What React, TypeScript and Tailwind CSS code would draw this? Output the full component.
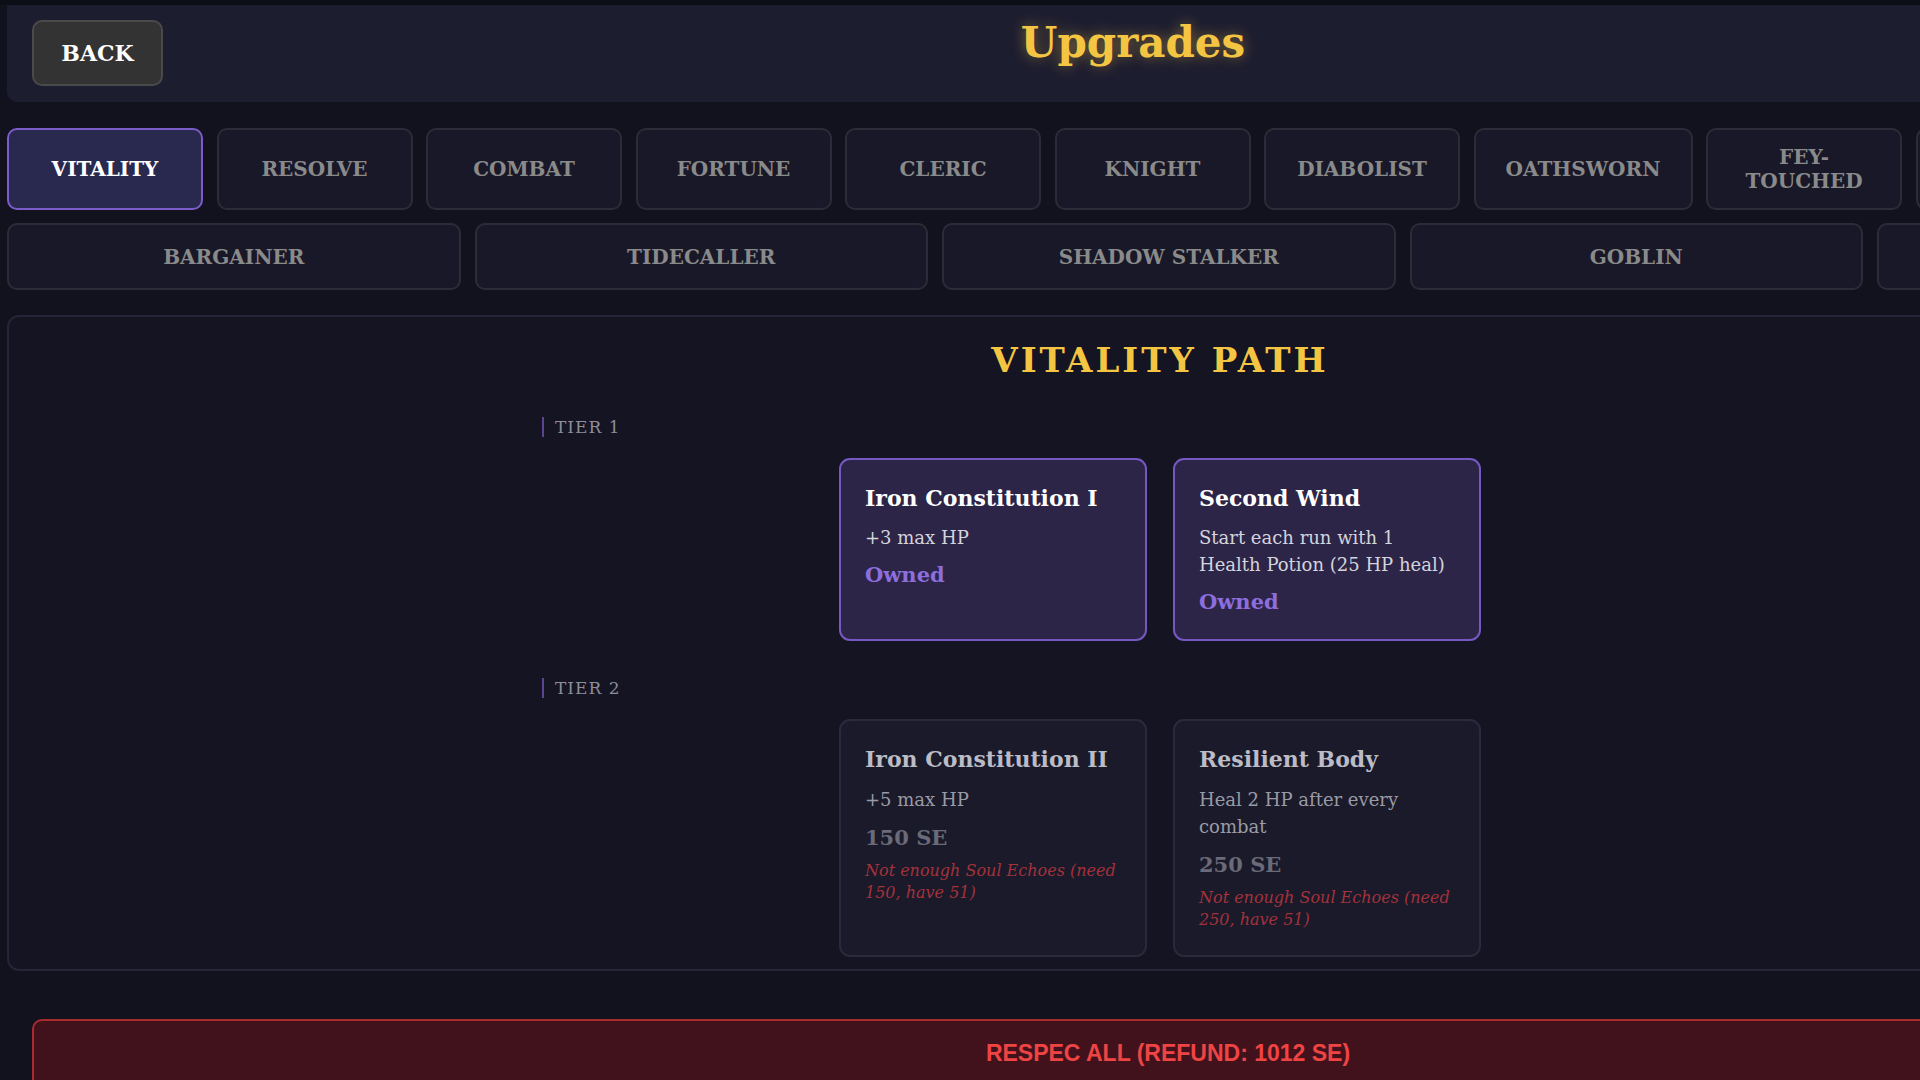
import React from "react";

const topTabs = [
  { label: "VITALITY", w: "w-[196px]", active: true },
  { label: "RESOLVE", w: "w-[196px]" },
  { label: "COMBAT", w: "w-[196px]" },
  { label: "FORTUNE", w: "w-[196px]" },
  { label: "CLERIC", w: "w-[196px]" },
  { label: "KNIGHT", w: "w-[196px]" },
  { label: "DIABOLIST", w: "w-[196px]" },
  { label: "OATHSWORN", w: "w-[219px]" },
  { label: "FEY-TOUCHED", w: "w-[196px]" },
  { label: "", w: "w-[196px]" },
];

const classTabs = ["BARGAINER", "TIDECALLER", "SHADOW STALKER", "GOBLIN", ""];

type Upgrade = {
  name: string;
  desc: string;
  owned?: boolean;
  cost?: number;
};

const tiers: { label: string; items: Upgrade[] }[] = [
  {
    label: "TIER 1",
    items: [
      { name: "Iron Constitution I", desc: "+3 max HP", owned: true },
      { name: "Second Wind", desc: "Start each run with 1 Health Potion (25 HP heal)", owned: true },
    ],
  },
  {
    label: "TIER 2",
    items: [
      { name: "Iron Constitution II", desc: "+5 max HP", cost: 150 },
      { name: "Resilient Body", desc: "Heal 2 HP after every combat", cost: 250 },
    ],
  },
];

function Tab({ label, w, active }: { label: string; w: string; active?: boolean }) {
  return (
    <button
      className={
        "flex h-[82px] shrink-0 items-center justify-center rounded-[10px] border-2 px-6 text-center text-[20px] font-bold leading-[1.2] " +
        w +
        (active
          ? " border-[#7b5cc8] bg-[#29284f] text-white"
          : " border-[#2c2c38] bg-[#181828] text-[#8a8a8a]")
      }
    >
      {label}
    </button>
  );
}

function UpgradeCard({ item }: { item: Upgrade }) {
  if (item.owned) {
    return (
      <div className="flex w-[308px] flex-col rounded-[11px] border-2 border-[#7558c0] bg-[#2c2548] p-6">
        <h3 className="mb-3 text-[22px] font-bold leading-[1.3] text-white">{item.name}</h3>
        <p className="text-[18px] leading-[27px] text-[#d4d4dc]">{item.desc}</p>
        <span className="mt-[10px] text-[21px] font-bold leading-[27px] text-[#8d6edc]">Owned</span>
      </div>
    );
  }
  return (
    <div className="flex w-[308px] flex-col rounded-[11px] border-2 border-[#2a2a3c] bg-[#1a1a2a] p-6">
      <h3 className="mb-3 text-[22px] font-bold leading-[1.3] text-[#bcbcc6]">{item.name}</h3>
      <p className="text-[18px] leading-[27px] text-[#9a9aa6]">{item.desc}</p>
      <span className="mt-2 text-[21px] font-bold leading-[33px] text-[#6a6a78]">{item.cost} SE</span>
      <p className="mt-[6px] text-[16px] italic leading-[22px] text-[#a3323b]">
        Not enough Soul Echoes (need {item.cost}, have 51)
      </p>
    </div>
  );
}

export default function App() {
  return (
    <div className="h-[1080px] w-[1920px] overflow-hidden bg-[#12121e] font-['DejaVu_Serif',serif]">
      <div className="h-[5px] w-full bg-[#0c0e16]" />
      <div className="w-[2330px] pl-[7px]">
        {/* header */}
        <div className="grid w-[2252px] grid-cols-[1fr_auto_1fr] items-start rounded-b-[10px] bg-[#1d1d30] px-[25px] pb-[16px] pt-[15px]">
          <div>
            <button className="h-[66px] w-[131px] rounded-[10px] border-2 border-[#4a4a4a] bg-[#333333] text-[22px] font-bold text-white">
              BACK
            </button>
          </div>
          <h1 className="mt-[2px] text-[42px] font-bold leading-none text-[#f4c542] [text-shadow:0_0_14px_rgba(244,197,66,0.45)]">
            Upgrades
          </h1>
          <div />
        </div>

        {/* category tabs */}
        <div className="mt-[26px] flex gap-[13.5px]">
          {topTabs.map((t, i) => (
            <Tab key={i} label={t.label} w={t.w} active={t.active} />
          ))}
        </div>
        <div className="mt-[13px] flex gap-[14px]">
          {classTabs.map((c, i) => (
            <button
              key={i}
              className="h-[67px] w-[453.5px] shrink-0 rounded-[10px] border-2 border-[#2c2c38] bg-[#181828] text-[20px] font-bold text-[#8a8a8a]"
            >
              {c}
            </button>
          ))}
        </div>

        {/* path panel */}
        <div className="mt-[25px] w-[2306px] rounded-[12px] border-2 border-[#25253a] bg-[#141422] pb-[12px] pt-[23px]">
          <h2 className="mb-[36px] text-center text-[34px] font-bold leading-[1.2] tracking-[3px] text-[#f4c542]">
            VITALITY PATH
          </h2>
          <div className="mx-auto flex w-[1236px] flex-col">
            {tiers.map((tier, ti) => (
              <div key={tier.label} className={ti > 0 ? "mt-[37px]" : ""}>
                <div className="border-l-2 border-[#5b4590] pl-[11px] text-[17px] leading-[20px] tracking-[1px] text-[#8d8d9c]">
                  {tier.label}
                </div>
                <div className="mt-[21px] flex justify-center gap-[26px]">
                  {tier.items.map((item) => (
                    <UpgradeCard key={item.name} item={item} />
                  ))}
                </div>
              </div>
            ))}
          </div>
        </div>

        {/* respec */}
        <button className="ml-[25px] mt-[48px] w-[2272px] rounded-[10px] border-2 border-[#a82c2c] bg-[#42121c] pb-[30px] pt-[15px] font-['Liberation_Sans',Arial,sans-serif] text-[23px] font-bold leading-[1.5] text-[#ef4444]">
          RESPEC ALL (REFUND: 1012 SE)
        </button>
      </div>
    </div>
  );
}
